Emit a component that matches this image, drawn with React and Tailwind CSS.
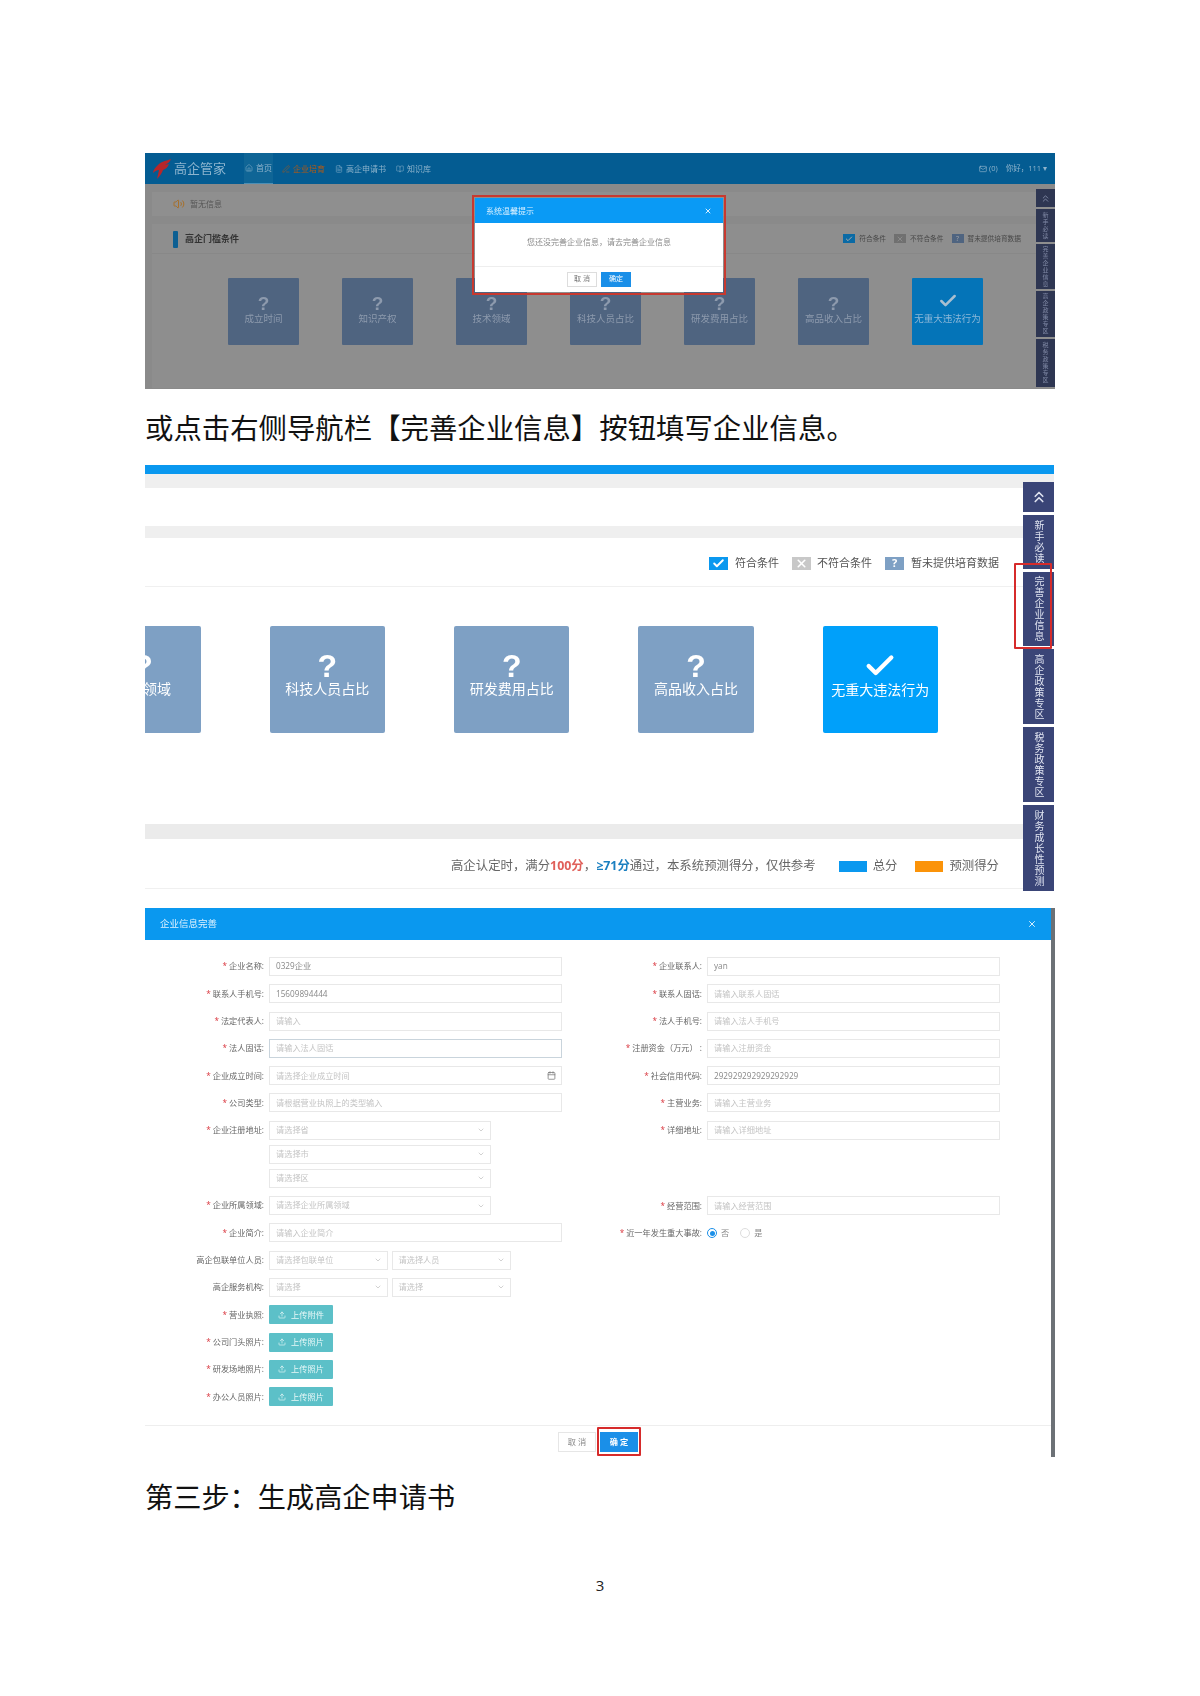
import { Check, ChevronDown, ChevronsUp, Calendar, Upload, X, Home, Mail, BookOpen, FileText, Volume2, Edit3 } from 'lucide-react'

const oldCards = ['成立时间', '知识产权', '技术领域', '科技人员占比', '研发费用占比', '高品收入占比']
const sideSmall = [
  { text: '新手必读', h: 'h-[33px]' },
  { text: '完善企业信息', h: 'h-[45px]' },
  { text: '高企政策专区', h: 'h-[46px]' },
  { text: '税务政策专区', h: 'h-[48px]' },
]
const sideBig = [
  { text: '新手必读', h: 'h-[54px]' },
  { text: '完善企业信息', h: 'h-[74px]' },
  { text: '高企政策专区', h: 'h-[75px]' },
  { text: '税务政策专区', h: 'h-[75px]' },
  { text: '财务成长性预测', h: 'h-[86px]' },
]

function Logo() {
  return (
    <svg width="18" height="20" viewBox="0 0 18 20" className="shrink-0">
      <path d="M18 0 C12 2 7 3 4 7 C2 9 0 11 0 14 C2 12 4 11 6 11 L4 20 C7 17 9 14 10 11 C13 10 15 8 16 5 L12 6 C15 4 17 3 18 0 Z" fill="#b8262a" />
    </svg>
  )
}

function NavItem({ icon: Icon, label, active, orange }) {
  return (
    <div className={`flex items-center gap-[3px] h-[31px] px-[1px] text-[8px] ${active ? 'border-b border-[#4d8fb5] bg-[#0f6596]' : ''} ${orange ? 'text-[#b55a12]' : 'text-[#8fb4cc]'}`}>
      <Icon size={8} strokeWidth={1.5} />
      <span>{label}</span>
    </div>
  )
}

function OldCard({ label, active }) {
  return (
    <div className={`w-[71px] h-[67px] rounded-[1px] flex flex-col items-center pt-[17px] text-[#8d9aad] ${active ? 'bg-[#0474b8]' : 'bg-[#4f6480]'}`}>
      {active ? <Check size={20} strokeWidth={3} className="text-[#a9bfd0] -mt-[4px] mb-[1px]" /> : <span className="text-[19px] leading-[17px] font-bold font-['Liberation_Sans',sans-serif]">?</span>}
      <span className={`text-[9.5px] leading-[12px] mt-[1px] whitespace-nowrap ${active ? 'text-[#8cb7d8]' : ''}`}>{label}</span>
    </div>
  )
}

function FirstShot() {
  return (
    <div className="relative w-[910px] h-[236px] bg-[#8a8a8a] overflow-hidden blur-[0.4px]">
      <div className="h-[31px] bg-[#045c92] flex items-center pl-[8px]">
        <Logo />
        <span className="text-[#8db5cf] text-[13px] ml-[3px] w-[52px]">高企管家</span>
        <div className="flex gap-[8px] ml-[18px]">
          <NavItem icon={Home} label="首页" active />
          <NavItem icon={Edit3} label="企业培育" orange />
          <NavItem icon={FileText} label="高企申请书" />
          <NavItem icon={BookOpen} label="知识库" />
        </div>
        <div className="ml-auto pr-[8px] flex items-center gap-[8px] text-[7.5px] text-[#8fb4cc]">
          <span className="flex items-center gap-[2px]"><Mail size={8} />(0)</span>
          <span>你好，111 ▾</span>
        </div>
      </div>
      <div className="ml-[7px]">
        <div className="mt-[8px] h-[24px] bg-[#8f8f8f] flex items-center pl-[21px] gap-[5px] text-[8px] text-[#555]">
          <Volume2 size={12} className="text-[#a8702a]" />
          <span>暂无信息</span>
        </div>
        <div className="mt-[8px] h-[164px] bg-[#8e8e8e]">
          <div className="h-[30px] border-b border-[#888] flex items-center pl-[21px] pt-[1px]">
            <div className="w-[5px] h-[17px] bg-[#0d5f92] rounded-[1px]" />
            <span className="ml-[7px] text-[9px] font-bold text-[#333]">高企门槛条件</span>
            <div className="ml-auto flex items-center text-[6.7px] text-[#484848] pr-[34px]">
              <span className="w-[12px] h-[9px] bg-[#0a6aa5] flex items-center justify-center mr-[4px]"><Check size={8} strokeWidth={3} className="text-[#aaa]" /></span>
              <span className="mr-[8px]">符合条件</span>
              <span className="w-[12px] h-[9px] bg-[#707070] flex items-center justify-center mr-[4px]"><X size={8} className="text-[#999]" /></span>
              <span className="mr-[8px]">不符合条件</span>
              <span className="w-[12px] h-[9px] bg-[#4f6480] flex items-center justify-center text-[#aaa] mr-[4px]">?</span>
              <span>暂未提供培育数据</span>
            </div>
          </div>
          <div className="flex gap-[43px] pl-[76px] pt-[24px]">
            {oldCards.map((c) => <OldCard key={c} label={c} />)}
            <OldCard label="无重大违法行为" active />
          </div>
        </div>
      </div>

      <div className="absolute top-[36px] right-0 w-[19px] flex flex-col gap-[2px] text-[6px] text-[#8089a5]">
        <div className="h-[18px] bg-[#2e3652] flex items-center justify-center"><ChevronsUp size={11} /></div>
        {sideSmall.map((s) => (
          <div key={s.text} className={`${s.h} bg-[#2e3652] flex items-center justify-center text-center leading-[7px] px-[6px]`}>{s.text}</div>
        ))}
      </div>

      <div className="absolute left-[327px] top-[42px] w-[254px] h-[100px] border-[2px] border-[#c8392f] p-[1px]">
        <div className="w-full h-full bg-white flex flex-col">
          <div className="h-[25px] bg-[#0a9af5] flex items-center justify-between px-[11px] text-[8px] text-[#d6efff]">
            <span>系统温馨提示</span>
            <X size={8} strokeWidth={3} />
          </div>
          <div className="flex-1 flex items-center justify-center text-[8px] text-[#8a8a8a] pb-[5px]">您还没完善企业信息，请去完善企业信息</div>
          <div className="h-[26px] border-t border-[#eee] flex items-center justify-end gap-[4px] pr-[92px]">
            <span className="w-[30px] h-[15px] border border-[#ddd] flex items-center justify-center text-[7px] text-[#777]">取 消</span>
            <span className="w-[30px] h-[15px] bg-[#1a8fe8] flex items-center justify-center text-[7px] text-white">确定</span>
          </div>
        </div>
      </div>
    </div>
  )
}

function BigCard({ label, active, cut }) {
  return (
    <div className={`shrink-0 w-[115.3px] h-[107px] rounded-[2px] flex flex-col items-center pt-[29px] text-white ${active ? 'bg-[#00a0fa]' : 'bg-[#7ea0c4]'} ${cut ? '-ml-[59.6px]' : ''}`}>
      {active
        ? <Check size={34} strokeWidth={3} className="-mt-[6px] -mb-[4px]" />
        : <span className="text-[32px] leading-[23px] font-bold font-['Liberation_Sans',sans-serif]">?</span>}
      <span className="text-[14px] leading-[20px] mt-[1px] whitespace-nowrap">{label}</span>
    </div>
  )
}

function SecondShot() {
  return (
    <div className="relative w-[909px] h-[430px] bg-white overflow-hidden blur-[0.3px]">
      <div className="h-[9px] bg-[#0a98ef]" />
      <div className="h-[14px] bg-[#efefef]" />
      <div className="h-[38px]" />
      <div className="h-[12px] bg-[#efefef]" />
      <div className="h-[49px] border-b border-[#f0f0f0] flex items-center justify-end pr-[55px] pt-[2px] text-[11px] text-[#555]">
        <span className="w-[19px] h-[13px] bg-[#0a98ef] flex items-center justify-center mr-[7px]"><Check size={13} strokeWidth={3.5} className="text-white" /></span>
        <span className="mr-[13px]">符合条件</span>
        <span className="w-[19px] h-[13px] bg-[#c8c8c8] flex items-center justify-center mr-[6px]"><X size={13} strokeWidth={3} className="text-white" /></span>
        <span className="mr-[13px]">不符合条件</span>
        <span className="w-[19px] h-[13px] bg-[#7ea0c4] flex items-center justify-center mr-[7px] text-white font-bold">?</span>
        <span>暂未提供培育数据</span>
      </div>
      <div className="h-[237px] overflow-hidden">
        <div className="flex gap-[69px] pt-[39px]">
          <BigCard label="技术领域" cut />
          <BigCard label="科技人员占比" />
          <BigCard label="研发费用占比" />
          <BigCard label="高品收入占比" />
          <BigCard label="无重大违法行为" active />
        </div>
      </div>
      <div className="h-[15px] bg-[#ebebeb]" />
      <div className="h-[50px] border-b border-[#f0f0f0] flex items-center justify-end pr-[55px] pt-[6px] text-[12.4px] text-[#666]">
        <span>高企认定时，满分<b className="text-[#e0605a]">100分</b>，<b className="text-[#1a7fc0]">≥71分</b>通过，本系统预测得分，仅供参考</span>
        <span className="w-[28px] h-[11px] bg-[#0a98ef] ml-[23px] mr-[6px]" />
        <span className="mr-[18px]">总分</span>
        <span className="w-[28px] h-[11px] bg-[#fb9309] mr-[6px]" />
        <span>预测得分</span>
      </div>

      <div className="absolute right-0 top-[17px] w-[31px] flex flex-col gap-[3px] text-[10px] text-[#dfe3f0]">
        <div className="h-[30px] bg-[#3a4577] flex items-center justify-center"><ChevronsUp size={18} strokeWidth={2.2} /></div>
        {sideBig.map((s) => (
          <div key={s.text} className={`${s.h} bg-[#3a4577] flex items-center justify-center text-center leading-[11px] pl-[11px] pr-[9px]`}>{s.text}</div>
        ))}
      </div>
      <div className="absolute right-[2px] top-[98px] w-[38px] h-[86px] border-[2px] border-[#d62b2b] rounded-[1px]" />
    </div>
  )
}

function Label({ text, required = true }) {
  return (
    <div className="shrink-0 text-right text-[8.2px] text-[#666] whitespace-nowrap">
      {required && <span className="text-[#d9363e] mr-[2px]">*</span>}
      {text}:
    </div>
  )
}

function Field({ label, required, labelW, children }) {
  return (
    <div className="flex items-start gap-[5px]">
      <div className={`${labelW} shrink-0 h-[19px] flex items-center justify-end`}>
        <Label text={label} required={required} />
      </div>
      {children}
    </div>
  )
}

function Input({ text, value, icon, strong }) {
  return (
    <div className={`w-[293px] h-[19px] border ${strong ? 'border-[#c9d4dc]' : 'border-[#e8e8e8]'} flex items-center justify-between pl-[6px] pr-[5px] text-[8.2px] ${value ? 'text-[#888]' : 'text-[#c4c4c4]'}`}>
      <span>{value || text}</span>
      {icon && <Calendar size={9} className="text-[#777]" />}
    </div>
  )
}

function Select({ text, w = 'w-[222px]' }) {
  return (
    <div className={`${w} h-[19px] border border-[#e8e8e8] flex items-center justify-between pl-[6px] pr-[5px] text-[8.2px] text-[#c4c4c4]`}>
      <span>{text}</span>
      <ChevronDown size={8} className="text-[#bbb]" />
    </div>
  )
}

function UploadBtn({ text }) {
  return (
    <div className="w-[64px] h-[19px] bg-[#5cc0c8] rounded-[1px] flex items-center justify-center gap-[5px] text-[8.2px] text-[#e8f8f8]">
      <Upload size={8} />
      <span>{text}</span>
    </div>
  )
}

function FormLeft() {
  const w = 'w-[119px]'
  return (
    <div className="w-[417px] flex flex-col gap-[8.3px]">
      <Field labelW={w} label="企业名称"><Input value="0329企业" /></Field>
      <Field labelW={w} label="联系人手机号"><Input value="15609894444" /></Field>
      <Field labelW={w} label="法定代表人"><Input text="请输入" /></Field>
      <Field labelW={w} label="法人固话"><Input text="请输入法人固话" strong /></Field>
      <Field labelW={w} label="企业成立时间"><Input text="请选择企业成立时间" icon /></Field>
      <Field labelW={w} label="公司类型"><Input text="请根据营业执照上的类型输入" /></Field>
      <Field labelW={w} label="企业注册地址">
        <div className="flex flex-col gap-[5px]">
          <Select text="请选择省" />
          <Select text="请选择市" />
          <Select text="请选择区" />
        </div>
      </Field>
      <Field labelW={w} label="企业所属领域"><Select text="请选择企业所属领域" /></Field>
      <Field labelW={w} label="企业简介"><Input text="请输入企业简介" /></Field>
      <Field labelW={w} label="高企包联单位人员" required={false}>
        <div className="flex gap-[3.5px]">
          <Select text="请选择包联单位" w="w-[119px]" />
          <Select text="请选择人员" w="w-[119px]" />
        </div>
      </Field>
      <Field labelW={w} label="高企服务机构" required={false}>
        <div className="flex gap-[3.5px]">
          <Select text="请选择" w="w-[119px]" />
          <Select text="请选择" w="w-[119px]" />
        </div>
      </Field>
      <Field labelW={w} label="营业执照"><UploadBtn text="上传附件" /></Field>
      <Field labelW={w} label="公司门头照片"><UploadBtn text="上传照片" /></Field>
      <Field labelW={w} label="研发场地照片"><UploadBtn text="上传照片" /></Field>
      <Field labelW={w} label="办公人员照片"><UploadBtn text="上传照片" /></Field>
    </div>
  )
}

function ThirdShot() {
  const w = 'w-[140px]'
  return (
    <div className="relative w-[910px] h-[549px] bg-white border-r-[4px] border-[#6c7176] overflow-hidden blur-[0.3px]">
      <div className="h-[32px] bg-[#0a98ef] flex items-center justify-between pl-[15px] pr-[14px] text-[9.5px] text-[#dff2ff]">
        <span>企业信息完善</span>
        <X size={10} strokeWidth={2} className="text-white" />
      </div>
      <div className="flex pt-[17px] h-[486px] border-b border-[#eee]">
        <FormLeft />
        <div className="flex flex-col gap-[8.3px]">
          <Field labelW={w} label="企业联系人"><Input value="yan" /></Field>
          <Field labelW={w} label="联系人固话"><Input text="请输入联系人固话" /></Field>
          <Field labelW={w} label="法人手机号"><Input text="请输入法人手机号" /></Field>
          <Field labelW={w} label="注册资金（万元） "><Input text="请输入注册资金" /></Field>
          <Field labelW={w} label="社会信用代码"><Input value="292929292929292929" /></Field>
          <Field labelW={w} label="主营业务"><Input text="请输入主营业务" /></Field>
          <Field labelW={w} label="详细地址"><Input text="请输入详细地址" /></Field>
          <div className="h-[40px]" />
          <Field labelW={w} label="经营范围"><Input text="请输入经营范围" /></Field>
          <Field labelW={w} label="近一年发生重大事故">
            <div className="h-[19px] flex items-center text-[8.2px] text-[#888]">
              <span className="w-[10px] h-[10px] rounded-full border border-[#1a8fe8] flex items-center justify-center">
                <span className="w-[5px] h-[5px] rounded-full bg-[#1a8fe8]" />
              </span>
              <span className="ml-[4px]">否</span>
              <span className="w-[10px] h-[10px] rounded-full border border-[#ddd] ml-[11px]" />
              <span className="ml-[4px]">是</span>
            </div>
          </Field>
        </div>
      </div>
      <div className="flex justify-end gap-[4px] pt-[6px] pr-[413px] text-[8.2px]">
        <span className="w-[38px] h-[20px] border border-[#e6e6e6] flex items-center justify-center text-[#888]">取 消</span>
        <span className="w-[38px] h-[20px] bg-[#1a8fe8] flex items-center justify-center text-white font-bold">确 定</span>
      </div>
      <div className="absolute left-[452px] top-[519px] w-[44px] h-[29px] border-[2px] border-[#d62b2b] rounded-[1px]" />
    </div>
  )
}

export default function App() {
  return (
    <div className="w-[1200px] h-[1696px] bg-white pl-[145px] pt-[153px] font-['Open_Sans','Noto_Sans_CJK_SC',sans-serif]">
      <FirstShot />
      <p className="mt-[19px] h-[40px] leading-[40px] text-[28.4px] text-[#111] whitespace-nowrap">或点击右侧导航栏【完善企业信息】按钮填写企业信息。</p>
      <div className="mt-[17px]"><SecondShot /></div>
      <div className="mt-[13px]"><ThirdShot /></div>
      <p className="mt-[20px] h-[40px] leading-[40px] text-[28.2px] text-[#111]">第三步：生成高企申请书</p>
      <p className="mt-[58px] w-[910px] h-[20px] leading-[20px] text-center text-[15px] text-[#222]">3</p>
    </div>
  )
}
